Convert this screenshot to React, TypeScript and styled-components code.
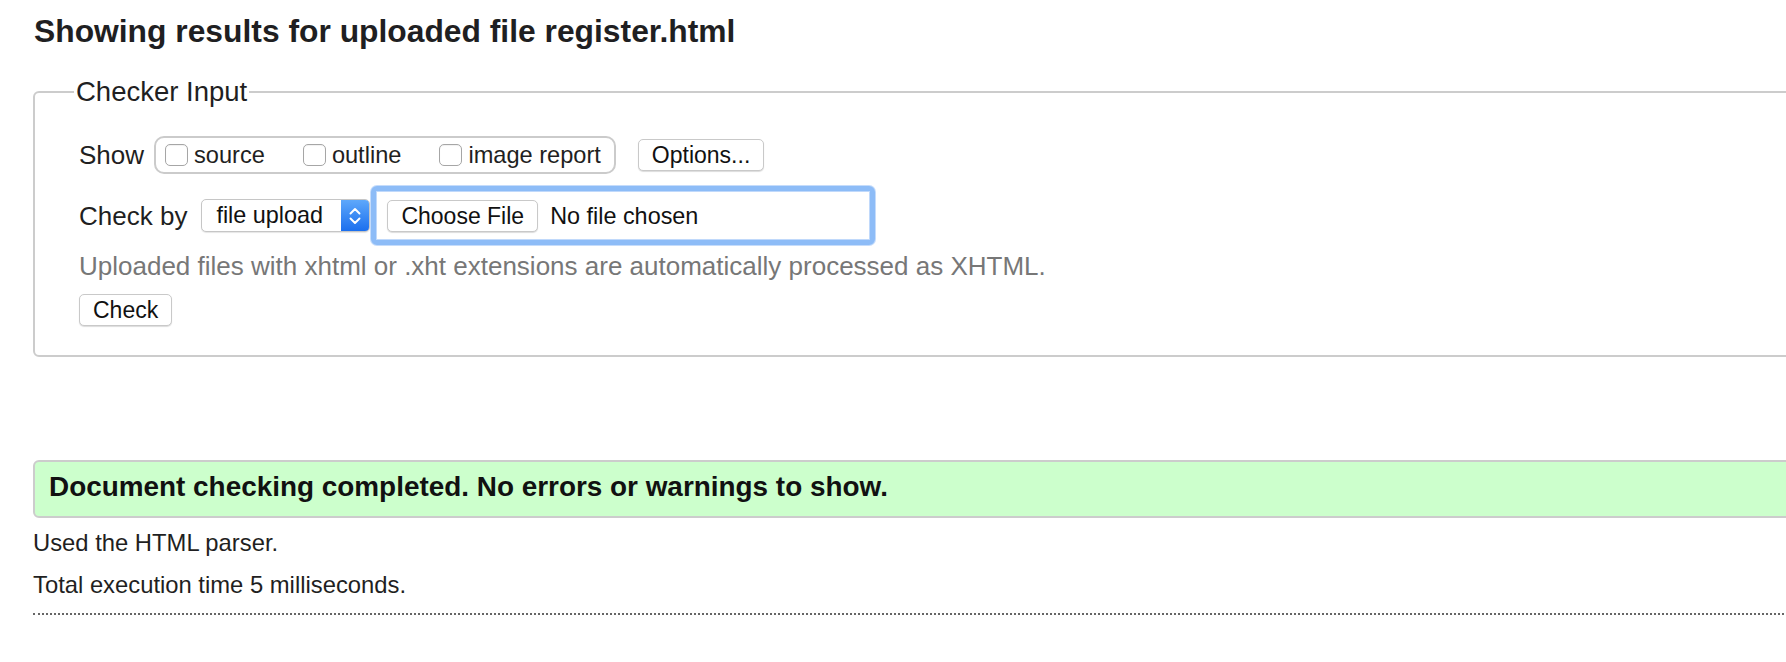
import React from 'react';
import styled, { createGlobalStyle } from 'styled-components';

const GlobalStyle = createGlobalStyle`
    html, body {
        margin: 0;
        padding: 0;
        overflow: hidden;
        background: #ffffff;
    }

    body {
        font-family: 'Liberation Sans', Helvetica, Arial, sans-serif;
        color: #222222;
    }
`;

const Page = styled.main`
    box-sizing: border-box;
    width: 1840px;
    padding: 13px 0 40px 33px;
`;

const Title = styled.h1`
    margin: 0;
    padding-left: 1px;
    font-size: 31.8px;
    line-height: 36px;
    font-weight: bold;
    color: #1f1f22;
`;

const CheckerFieldset = styled.fieldset`
    margin: 28px 0 0;
    min-width: 0;
    padding: 0 0 29px 44px;
    border: 2px solid #cccccc;
    border-radius: 6px;
`;

const Legend = styled.legend`
    margin-left: -5px;
    padding: 0 2px;
    font-size: 27.5px;
    line-height: 30px;
    color: #1f1f22;
`;

const Row = styled.div<{ $top: number }>`
    display: flex;
    align-items: center;
    margin-top: ${(props) => props.$top}px;
`;

const FieldLabel = styled.span<{ $gap: number }>`
    margin-right: ${(props) => props.$gap}px;
    font-size: 26px;
    line-height: 30px;
    color: #1f1f22;
`;

const ShowGroup = styled.div`
    display: flex;
    align-items: center;
    gap: 38px;
    box-sizing: border-box;
    height: 38px;
    padding: 0 13px 0 9px;
    border: 2px solid #cbcbcb;
    border-radius: 10px;
`;

const Option = styled.label`
    display: flex;
    align-items: center;
    font-size: 23.6px;
    line-height: 26px;
    color: #1f1f22;
`;

const CheckBox = styled.span`
    box-sizing: border-box;
    width: 23px;
    height: 22px;
    margin-right: 6px;
    background: #ffffff;
    border: 1px solid #a6a6a6;
    border-radius: 5px;
    box-shadow: inset 0 1px 1px rgba(0, 0, 0, 0.06);
`;

const PushButton = styled.button<{ $left?: number }>`
    box-sizing: border-box;
    height: 32px;
    margin-left: ${(props) => props.$left || 0}px;
    padding: 0 13px;
    font-family: inherit;
    font-size: 23px;
    line-height: 30px;
    color: #111111;
    background: #ffffff;
    border: 1px solid #c9c9c9;
    border-radius: 5px;
    box-shadow: 0 1px 1px rgba(0, 0, 0, 0.14);
`;

const Select = styled.div`
    display: flex;
    box-sizing: border-box;
    width: 169px;
    height: 33px;
    background: #ffffff;
    border: 1px solid #c6c6c6;
    border-radius: 5px;
    box-shadow: 0 1px 1px rgba(0, 0, 0, 0.1);
    overflow: hidden;
`;

const SelectValue = styled.span`
    flex: 1;
    padding-left: 14px;
    font-size: 23.4px;
    line-height: 31px;
    color: #111111;
`;

const SelectArrows = styled.span`
    display: flex;
    align-items: center;
    justify-content: center;
    width: 28px;
    background: linear-gradient(#5ea8fb, #1b6fee);
`;

const FileBox = styled.div`
    display: flex;
    align-items: center;
    box-sizing: border-box;
    width: 504px;
    height: 59px;
    margin-left: 1px;
    padding-left: 11px;
    background: #ffffff;
    border: 5px solid #8dbcf7;
    border-radius: 6px;
    box-shadow: inset 0 0 0 1px #c0d9fb, 0 0 0 1px #c5dcfb;
`;

const NoFile = styled.span`
    margin-left: 12px;
    font-size: 23.4px;
    line-height: 30px;
    color: #111111;
`;

const Hint = styled.p`
    margin: 6px 0 0;
    font-size: 26px;
    line-height: 30px;
    color: #777777;
`;

const ButtonRow = styled.div`
    display: flex;
    margin-top: 13px;
`;

const Success = styled.div`
    margin-top: 103px;
    padding: 9px 14px 13px;
    font-size: 27.9px;
    line-height: 32px;
    font-weight: bold;
    color: #111111;
    background: #ccffcc;
    border: 2px solid #cccccc;
    border-radius: 6px;
`;

const Info = styled.div`
    margin-top: 4px;
    padding-bottom: 7px;
    border-bottom: 2px dotted #666666;
`;

const InfoLine = styled.p`
    margin: 0;
    font-size: 23.8px;
    line-height: 42px;
    color: #1f1f22;
`;

function Chevrons(): JSX.Element {
    return (
        <svg width='14' height='22' viewBox='0 0 14 22' fill='none'>
            <path d='M2.5 8.5 L7 4 L11.5 8.5' stroke='#ffffff' strokeWidth='1.9' strokeLinecap='round' strokeLinejoin='round' />
            <path d='M2.5 13.5 L7 18 L11.5 13.5' stroke='#ffffff' strokeWidth='1.9' strokeLinecap='round' strokeLinejoin='round' />
        </svg>
    );
}

const showOptions = ['source', 'outline', 'image report'];

export default function App(): JSX.Element {
    return (
        <>
            <GlobalStyle />
            <Page>
                <Title>Showing results for uploaded file register.html</Title>
                <CheckerFieldset>
                    <Legend>Checker Input</Legend>
                    <Row $top={29}>
                        <FieldLabel $gap={10}>Show</FieldLabel>
                        <ShowGroup>
                            {showOptions.map((name) => (
                                <Option key={name}>
                                    <CheckBox />
                                    {name}
                                </Option>
                            ))}
                        </ShowGroup>
                        <PushButton type='button' $left={22}>Options...</PushButton>
                    </Row>
                    <Row $top={12}>
                        <FieldLabel $gap={14}>Check by</FieldLabel>
                        <Select>
                            <SelectValue>file upload</SelectValue>
                            <SelectArrows>
                                <Chevrons />
                            </SelectArrows>
                        </Select>
                        <FileBox>
                            <PushButton type='button'>Choose File</PushButton>
                            <NoFile>No file chosen</NoFile>
                        </FileBox>
                    </Row>
                    <Hint>Uploaded files with xhtml or .xht extensions are automatically processed as XHTML.</Hint>
                    <ButtonRow>
                        <PushButton type='button'>Check</PushButton>
                    </ButtonRow>
                </CheckerFieldset>
                <Success>Document checking completed. No errors or warnings to show.</Success>
                <Info>
                    <InfoLine>Used the HTML parser.</InfoLine>
                    <InfoLine>Total execution time 5 milliseconds.</InfoLine>
                </Info>
            </Page>
        </>
    );
}
